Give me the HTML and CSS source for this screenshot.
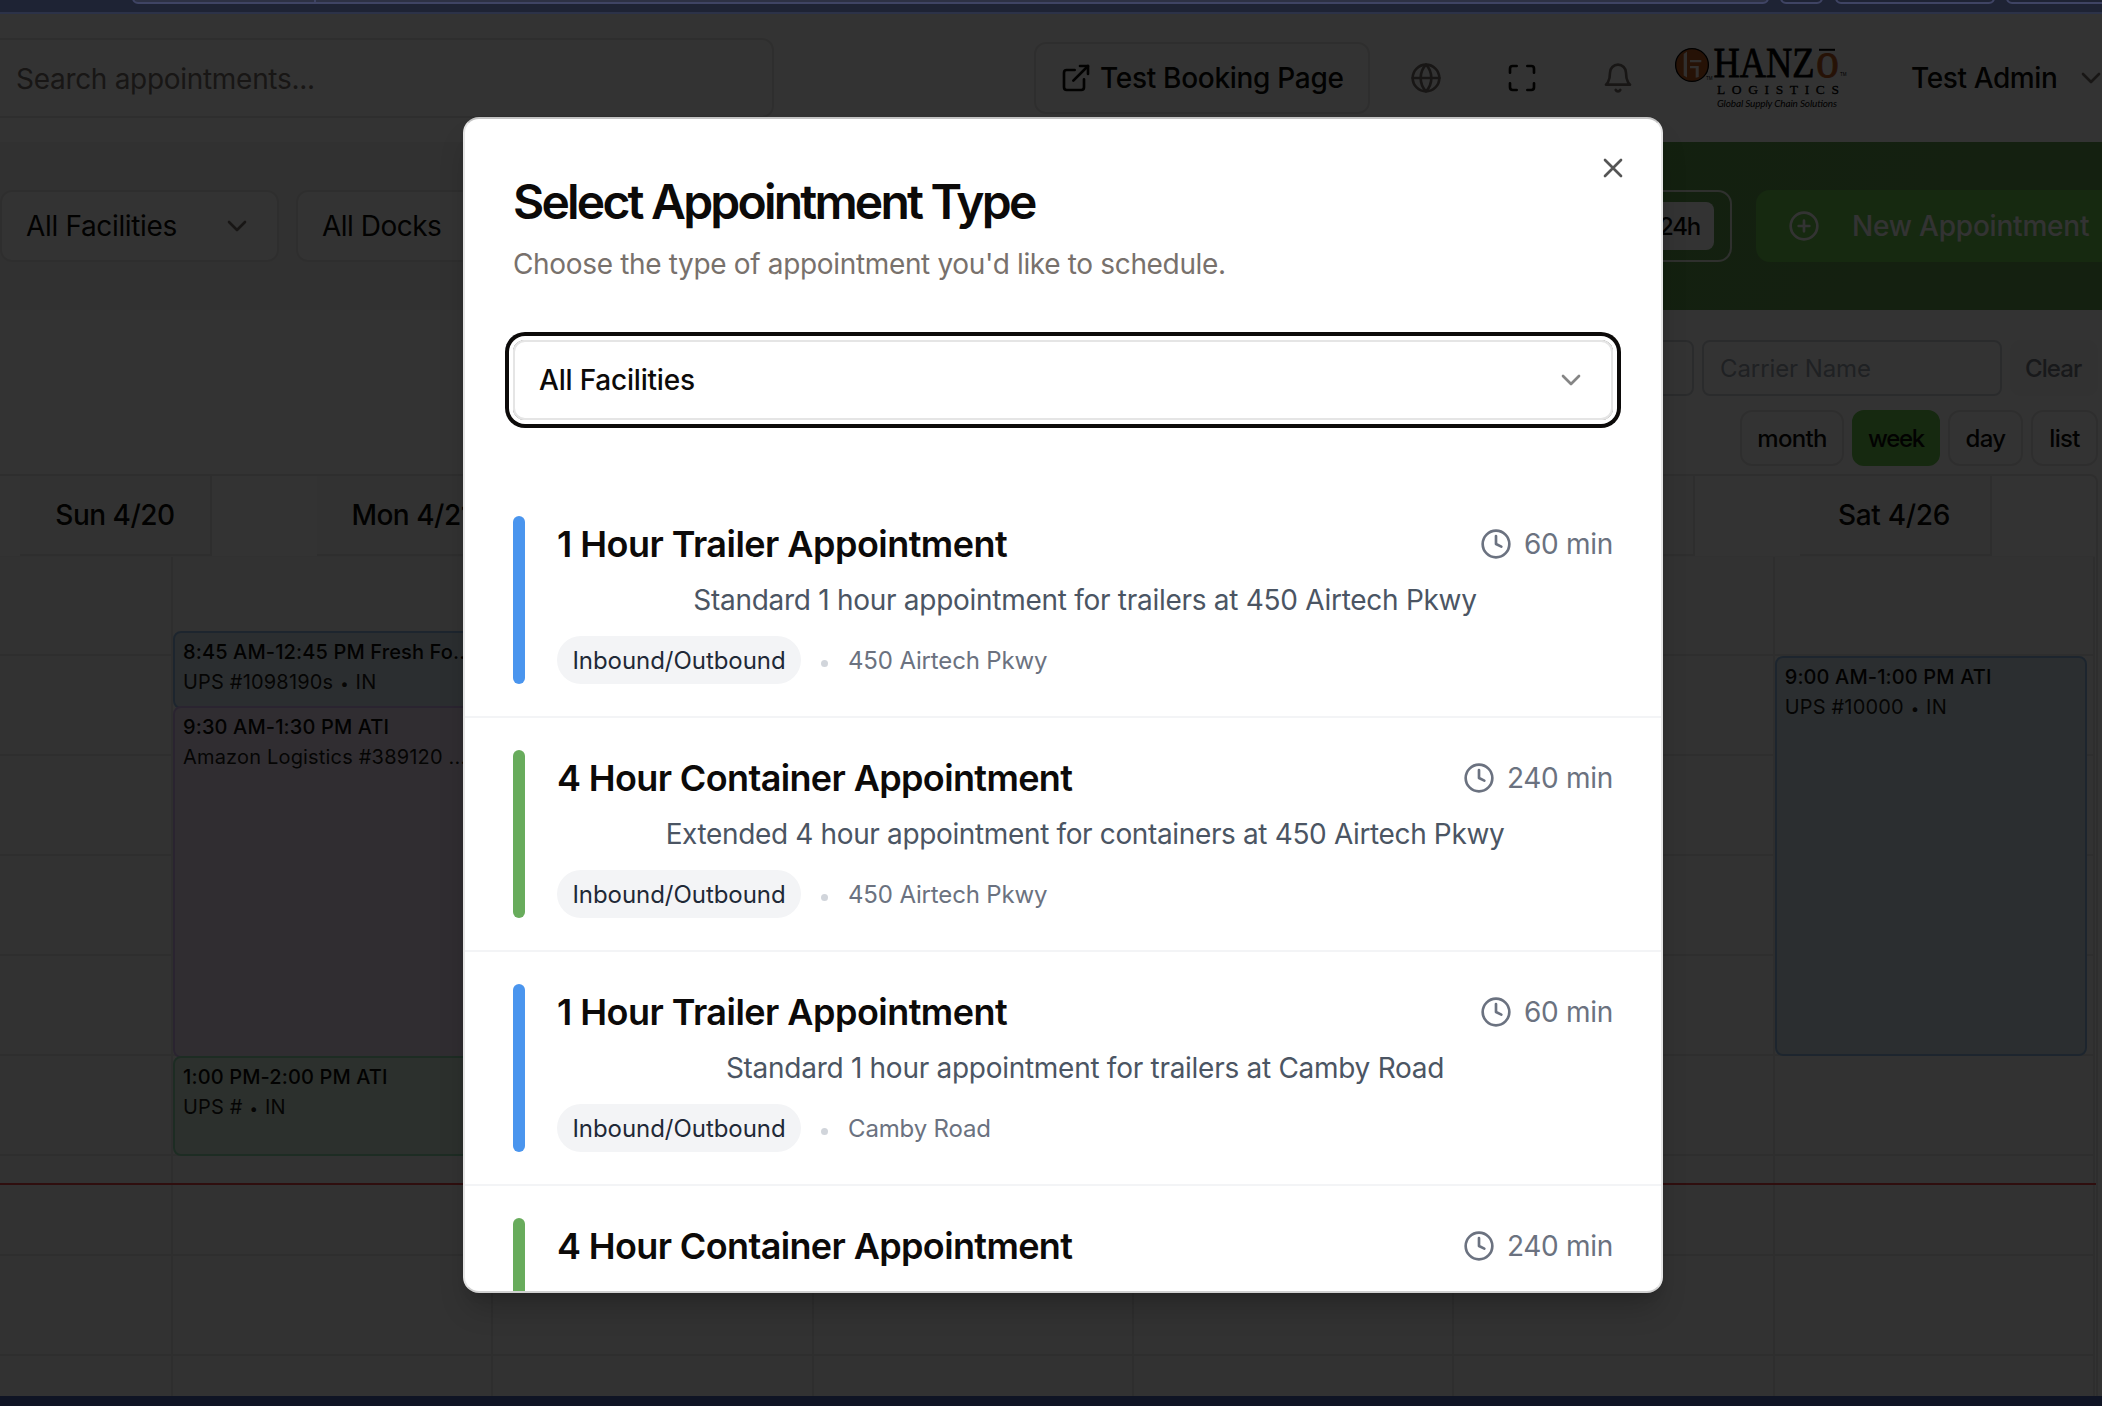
FILE: index.html
```html
<!DOCTYPE html>
<html lang="en">
<head>
<meta charset="utf-8">
<title>Appointments</title>
<link rel="stylesheet" href="styles.css">
</head>
<body>
<div class="chrome-top">
  <span class="tab tab-wide"></span><span class="tab tab-small"></span><span class="tab tab-mid"></span><span class="tab tab-end"></span>
</div>
<main class="page">
  <header class="topbar">
    <div class="search">Search appointments...</div>
    <div class="booking">
      <svg class="icon" viewBox="0 0 24 24"><path d="M15 3h6v6"/><path d="M10 14 21 3"/><path d="M18 13v6a2 2 0 0 1-2 2H5a2 2 0 0 1-2-2V8a2 2 0 0 1 2-2h6"/></svg>
      <span>Test Booking Page</span>
    </div>
    <svg class="icon muted globe" viewBox="0 0 24 24"><circle cx="12" cy="12" r="10"/><path d="M12 2a14.5 14.5 0 0 0 0 20 14.5 14.5 0 0 0 0-20"/><path d="M2 12h20"/></svg>
    <svg class="icon expand" viewBox="0 0 24 24"><path d="M8 3H5a2 2 0 0 0-2 2v3"/><path d="M21 8V5a2 2 0 0 0-2-2h-3"/><path d="M3 16v3a2 2 0 0 0 2 2h3"/><path d="M16 21h3a2 2 0 0 0 2-2v-3"/></svg>
    <svg class="icon muted bell" viewBox="0 0 24 24"><path d="M6 8a6 6 0 0 1 12 0c0 7 3 9 3 9H3s3-2 3-9"/><path d="M10.3 21a1.94 1.94 0 0 0 3.4 0"/></svg>
    <svg class="logo" viewBox="0 0 172 64">
      <circle cx="17" cy="18" r="16.4" fill="#bf5a1e" stroke="#000" stroke-width="1.3"/>
      <path d="M8.700 7 12 4.500V30.500L8.700 28.500zM15 13h11.300v2.300H15zM15 19h8.700v11l-3 .8V21.300H15z" fill="#f5ebe4"/>
      <text class="logo-name" x="38.500" y="29.500" textLength="101" lengthAdjust="spacingAndGlyphs">HANZ</text>
      <text class="logo-name logo-o" x="141" y="29.500" textLength="23" lengthAdjust="spacingAndGlyphs">o</text>
      <path d="M144 2.800h16" stroke="#000" stroke-width="2"/>
      <text class="logo-tm" x="165" y="29">TM</text>
      <text class="logo-tm" x="31" y="33">TM</text>
      <text class="logo-sub" x="42" y="47" textLength="122">LOGISTICS</text>
      <text class="logo-tag" x="42" y="60" textLength="120">Global Supply Chain Solutions</text>
    </svg>
    <span class="user">Test Admin</span>
    <svg class="icon muted user-chev" viewBox="0 0 24 24"><path d="m6 9 6 6 6-6"/></svg>
  </header>

  <section class="toolbar">
    <div class="toolbar-left">
      <div class="select">All Facilities<svg class="icon muted" viewBox="0 0 24 24"><path d="m6 9 6 6 6-6"/></svg></div>
      <div class="select docks">All Docks</div>
    </div>
    <div class="toolbar-right">
      <div class="segment"><span>24h</span></div>
      <div class="new-btn">
        <svg class="icon" viewBox="0 0 24 24"><circle cx="12" cy="12" r="10"/><path d="M8 12h8M12 8v8"/></svg>
        <span>New Appointment</span>
      </div>
    </div>
  </section>

  <section class="filters">
    <div class="filter-row">
      <div class="input"></div>
      <div class="input">Carrier Name</div>
      <div class="clear">Clear</div>
    </div>
    <div class="view-row">
      <div class="view month">month</div>
      <div class="view week">week</div>
      <div class="view day">day</div>
      <div class="view list">list</div>
    </div>
  </section>

  <section class="calendar">
    <div class="days">
      <div class="th">Sun 4/20</div><div class="th">Mon 4/21</div><div class="th"></div><div class="th"></div><div class="th"></div><div class="th"></div><div class="th sat">Sat 4/26</div>
    </div>
    <div class="grid">
      <div class="col"></div>
      <div class="col">
        <div class="event blue" style="top:74px;height:78px"><b>8:45 AM-12:45 PM Fresh Fo...</b><span>UPS #1098190s <i>•</i> IN</span></div>
        <div class="event purple" style="top:149px;height:352px"><b>9:30 AM-1:30 PM ATI</b><span>Amazon Logistics #389120 ...</span></div>
        <div class="event green" style="top:499px;height:100px"><b>1:00 PM-2:00 PM ATI</b><span>UPS # <i>•</i> IN</span></div>
      </div>
      <div class="col"></div><div class="col"></div><div class="col"></div><div class="col"></div>
      <div class="col">
        <div class="event blue" style="top:99px;height:400px"><b>9:00 AM-1:00 PM ATI</b><span>UPS #10000 <i>•</i> IN</span></div>
      </div>
      <div class="now"></div>
    </div>
  </section>

  <div class="overlay"></div>

  <div class="modal">
    <svg class="icon close" viewBox="0 0 24 24"><path d="M18 6 6 18M6 6l12 12"/></svg>
    <h2>Select Appointment Type</h2>
    <p class="lead">Choose the type of appointment you'd like to schedule.</p>
    <div class="facility">All Facilities<svg class="icon" viewBox="0 0 24 24"><path d="m6 9 6 6 6-6"/></svg></div>
    <div class="types">
      <article class="type trailer">
        <i class="bar"></i>
        <div class="info">
          <div class="head"><h3>1 Hour Trailer Appointment</h3><span class="mins"><svg class="icon" viewBox="0 0 24 24"><circle cx="12" cy="12" r="10"/><path d="M12 6v6l4 2"/></svg>60 min</span></div>
          <p class="desc">Standard 1 hour appointment for trailers at 450 Airtech Pkwy</p>
          <div class="meta"><span class="badge">Inbound/Outbound</span><i class="dot"></i><span class="place">450 Airtech Pkwy</span></div>
        </div>
      </article>
      <article class="type container">
        <i class="bar"></i>
        <div class="info">
          <div class="head"><h3>4 Hour Container Appointment</h3><span class="mins"><svg class="icon" viewBox="0 0 24 24"><circle cx="12" cy="12" r="10"/><path d="M12 6v6l4 2"/></svg>240 min</span></div>
          <p class="desc">Extended 4 hour appointment for containers at 450 Airtech Pkwy</p>
          <div class="meta"><span class="badge">Inbound/Outbound</span><i class="dot"></i><span class="place">450 Airtech Pkwy</span></div>
        </div>
      </article>
      <article class="type trailer">
        <i class="bar"></i>
        <div class="info">
          <div class="head"><h3>1 Hour Trailer Appointment</h3><span class="mins"><svg class="icon" viewBox="0 0 24 24"><circle cx="12" cy="12" r="10"/><path d="M12 6v6l4 2"/></svg>60 min</span></div>
          <p class="desc">Standard 1 hour appointment for trailers at Camby Road</p>
          <div class="meta"><span class="badge">Inbound/Outbound</span><i class="dot"></i><span class="place">Camby Road</span></div>
        </div>
      </article>
      <article class="type container">
        <i class="bar"></i>
        <div class="info">
          <div class="head"><h3>4 Hour Container Appointment</h3><span class="mins"><svg class="icon" viewBox="0 0 24 24"><circle cx="12" cy="12" r="10"/><path d="M12 6v6l4 2"/></svg>240 min</span></div>
        </div>
      </article>
    </div>
  </div>
</main>
<div class="chrome-bottom"></div>
</body>
</html>
```
FILE: styles.css
```css
* { box-sizing: border-box; }
body {
  margin: 0;
  width: 2102px;
  height: 1406px;
  overflow: hidden;
  display: flex;
  flex-direction: column;
  font-family: Inter, "Liberation Sans", sans-serif;
  font-size: 28px;
  letter-spacing: -0.3px;
  color: #0c0a09;
  background: #333;
}
h2, h3, p { margin: 0; }
.icon {
  fill: none;
  stroke: currentColor;
  stroke-width: 2;
  stroke-linecap: round;
  stroke-linejoin: round;
  width: 32px;
  height: 32px;
  flex: none;
}
.muted { color: #78716c; }

/* window frame */
.chrome-top {
  height: 14px;
  flex: none;
  display: flex;
  gap: 11px;
  padding-left: 132px;
  background: #1e2334;
  border-bottom: 2px solid #2c3248;
  overflow: hidden;
}
.tab {
  flex: none;
  height: 12px;
  margin-top: -8px;
  border: 2px solid #3f4464;
  border-radius: 10px;
}
.tab-wide { width: 1637px; background: linear-gradient(90deg, #2d3144 180px, #3f4464 180px 182px, #2d3144 182px); }
.tab-small { width: 43px; }
.tab-mid { width: 160px; margin-left: 1px; }
.tab-end { width: 160px; }
.chrome-bottom { height: 10px; flex: none; background: #0f1424; }

.page {
  position: relative;
  height: 1382px;
  flex: none;
  overflow: hidden;
  display: flex;
  flex-direction: column;
  background: #fff;
}

/* top bar */
.topbar { height: 128px; flex: none; display: flex; align-items: center; }
.search {
  width: 774px;
  height: 80px;
  flex: none;
  padding-left: 16px;
  line-height: 78px;
  border: 2px solid #e7e5e4;
  border-left: 0;
  border-radius: 0 12px 12px 0;
  color: #78716c;
}
.booking {
  margin-left: 260px;
  width: 336px;
  height: 72px;
  flex: none;
  padding-left: 24px;
  display: flex;
  align-items: center;
  gap: 8px;
  border: 2px solid #e7e5e4;
  border-radius: 12px;
  font-weight: 500;
}
.booking span { white-space: nowrap; }
.globe { margin-left: 40px; }
.expand { margin-left: 64px; }
.bell { margin-left: 64px; }
.logo { margin: 2px 0 0 41px; width: 172px; height: 64px; flex: none; overflow: visible; }
.logo-name { font: 42px "Liberation Serif", serif; letter-spacing: 0; stroke: #000; stroke-width: .8; }
.logo-o { fill: #bf5a1e; stroke: #bf5a1e; font-size: 50px; }
.logo-tm { font: 4.500px "Liberation Sans", sans-serif; letter-spacing: 0; }
.logo-sub { font: 13.500px "Liberation Serif", serif; letter-spacing: 0; stroke: #000; stroke-width: .3; }
.logo-tag { font: italic 10px Lato, sans-serif; letter-spacing: 0; }
.user { margin-left: 64px; width: 146px; flex: none; font-weight: 500; white-space: nowrap; letter-spacing: -0.39px; }
.user-chev { margin-left: 18px; }

/* green toolbar */
.toolbar { height: 168px; flex: none; display: flex; justify-content: space-between; background: #f5f5f4; }
.toolbar-left { display: flex; gap: 17px; padding: 48px 0 0; }
.select {
  width: 279px;
  height: 72px;
  padding: 0 24px;
  display: flex;
  align-items: center;
  justify-content: space-between;
  background: #fff;
  border: 2px solid #e7e5e4;
  border-radius: 12px;
  letter-spacing: -0.34px;
}
.docks { letter-spacing: -0.5px; }
.toolbar-right {
  width: 1202px;
  display: flex;
  justify-content: flex-end;
  gap: 24px;
  padding-top: 48px;
  background: linear-gradient(135deg, #5fa54c, #64a050);
}
.segment {
  width: 240px;
  height: 72px;
  padding: 10px 16px;
  display: flex;
  justify-content: flex-end;
  border: 2px solid #e8f0e6;
  border-radius: 14px;
}
.segment span {
  padding: 1px 14px 0 17px;
  line-height: 47px;
  background: #fff;
  border-radius: 8px;
  font-size: 24px;
  font-weight: 500;
  letter-spacing: -1.2px;
}
.new-btn {
  width: 346px;
  height: 72px;
  padding-left: 32px;
  display: flex;
  align-items: center;
  gap: 32px;
  border-radius: 14px 0 0 14px;
  background: #6dca50;
  color: #fff;
  font-weight: 500;
  letter-spacing: -0.2px;
  white-space: nowrap;
}

/* filters */
.filters {
  height: 164px;
  flex: none;
  display: flex;
  flex-direction: column;
  align-items: flex-end;
  gap: 14px;
  padding: 30px 4px 0;
  font-size: 24px;
}
.filter-row, .view-row { display: flex; gap: 8px; line-height: 54px; }
.input {
  width: 300px;
  height: 56px;
  padding-left: 16px;
  border: 2px solid #d1d5db;
  border-radius: 8px;
  color: #9ca3af;
  letter-spacing: -0.09px;
}
.clear {
  width: 88px;
  height: 56px;
  padding: 2px 0 0 15px;
  border-radius: 10px;
  background: #f8f8f8;
  color: #7a7d85;
  font-weight: 500;
  letter-spacing: -0.900px;
}
.view {
  height: 56px;
  border: 2px solid #e7e5e4;
  border-radius: 12px;
  text-align: center;
  font-weight: 500;
  letter-spacing: -0.7px;
}
.month { width: 104px; }
.week { width: 88px; background: #6dca50; border-color: #6dca50; letter-spacing: -1.3px; }
.day { width: 75px; }
.list { width: 67px; }

/* calendar */
.calendar {
  width: 2098px;
  flex: 1;
  display: flex;
  flex-direction: column;
  border: 2px solid #e7e5e4;
  border-width: 2px 2px 0 0;
  border-radius: 0 8px 0 0;
}
.days { height: 80px; flex: none; display: flex; gap: 104.600px; padding-left: 20px; }
.th {
  width: 192px;
  flex: none;
  line-height: 79px;
  text-align: center;
  background: #fafaf9;
  border: 2px solid #e7e5e4;
  border-width: 0 2px 2px 0;
  font-weight: 500;
  letter-spacing: -0.5px;
}
.th.sat { padding-right: 1px; letter-spacing: -0.3px; }
.grid {
  position: relative;
  flex: 1;
  width: 2095px;
  display: grid;
  grid-template-columns: 173px repeat(6, 1fr);
  border-top: 1px solid #f5f5f4;
}
.col {
  position: relative;
  border-right: 2px solid #e7e5e4;
  background: repeating-linear-gradient(#fff0 0 97px, #e7e5e4 97px 99px, #fff0 99px 100px) #fafafa;
}
.event {
  position: absolute;
  left: 0;
  right: 6px;
  padding: 4px 0 0 8px;
  border: 2px solid;
  border-radius: 8px;
  display: flex;
  flex-direction: column;
  font-size: 20px;
  line-height: 30px;
  white-space: nowrap;
  overflow: hidden;
  letter-spacing: .13px;
}
.event b { font-weight: 500; }
.event span { letter-spacing: .18px; color: #1c1917; }
.event i { font-style: normal; font-size: 15px; margin: 0 1px; }
.blue { background: #d8e6ee; border-color: #8fbbe6; }
.purple { background: #efe2f5; border-color: #d2b4ee; }
.green { background: #dcf0de; border-color: #90dcb0; }
.now { position: absolute; left: 0; right: -1px; top: 626px; height: 2px; background: #eb4646; }

.overlay { position: absolute; inset: 0; background: rgba(0, 0, 0, .8); }

/* dialog */
.modal {
  position: absolute;
  left: 463px;
  top: 103px;
  width: 1200px;
  height: 1176px;
  padding-top: 52px;
  overflow: hidden;
  background: #fff;
  border: 2px solid #e5e5e5;
  border-top-color: #c4c4c4;
  border-bottom-color: #d0d0d0;
  border-radius: 16px;
  box-shadow: 0 20px 30px -6px rgba(0, 0, 0, .2), 0 8px 12px -8px rgba(0, 0, 0, .2);
}
.close { position: absolute; top: 33px; right: 32px; color: #555; }
.modal h2 { padding-left: 48px; font-size: 48px; line-height: 61px; font-weight: 600; letter-spacing: -2.790px; }
.lead { padding-left: 48px; margin-top: 12px; line-height: 40px; color: #78716c; letter-spacing: -0.34px; }
.facility {
  margin: 56px 48px 0;
  height: 80px;
  padding: 0 24px;
  display: flex;
  align-items: center;
  justify-content: space-between;
  border: 2px solid #e5e5e5;
  border-radius: 12px;
  box-shadow: 0 0 0 4px #fff, 0 0 0 8px #0c0a09;
  font-weight: 500;
  letter-spacing: -0.2px;
}
.facility .icon { color: #858585; }
.types { margin-top: 64px; }
.type { display: flex; gap: 32px; padding: 32px 48px; height: 234px; border-bottom: 2px solid #f3f4f6; }
.bar { width: 12px; border-radius: 6px; flex: none; }
.trailer .bar { background: #4a95ee; }
.container .bar { background: #68ac5c; }
.info { flex: 1; }
.head { display: flex; justify-content: space-between; align-items: center; height: 56px; }
.head h3 { font-size: 36px; font-weight: 600; letter-spacing: -0.63px; }
.trailer h3 { letter-spacing: -0.53px; }
.mins { display: flex; align-items: center; gap: 12px; color: #6b7280; letter-spacing: -0.3px; }
.desc { height: 40px; margin-top: 8px; line-height: 41px; text-align: center; color: #4b5563; letter-spacing: -0.28px; }
.container .desc { letter-spacing: -0.36px; }
.meta { display: flex; align-items: center; height: 48px; margin-top: 16px; font-size: 24px; }
.badge { width: 244px; height: 48px; line-height: 49px; text-align: center; border-radius: 24px; background: #f3f4f6; color: #1f2937; letter-spacing: -0.050px; }
.dot { width: 7px; height: 7px; border-radius: 50%; margin: 6px 20px 0; background: #d1d5db; }
.place { color: #6b7280; letter-spacing: -0.15px; }
```
